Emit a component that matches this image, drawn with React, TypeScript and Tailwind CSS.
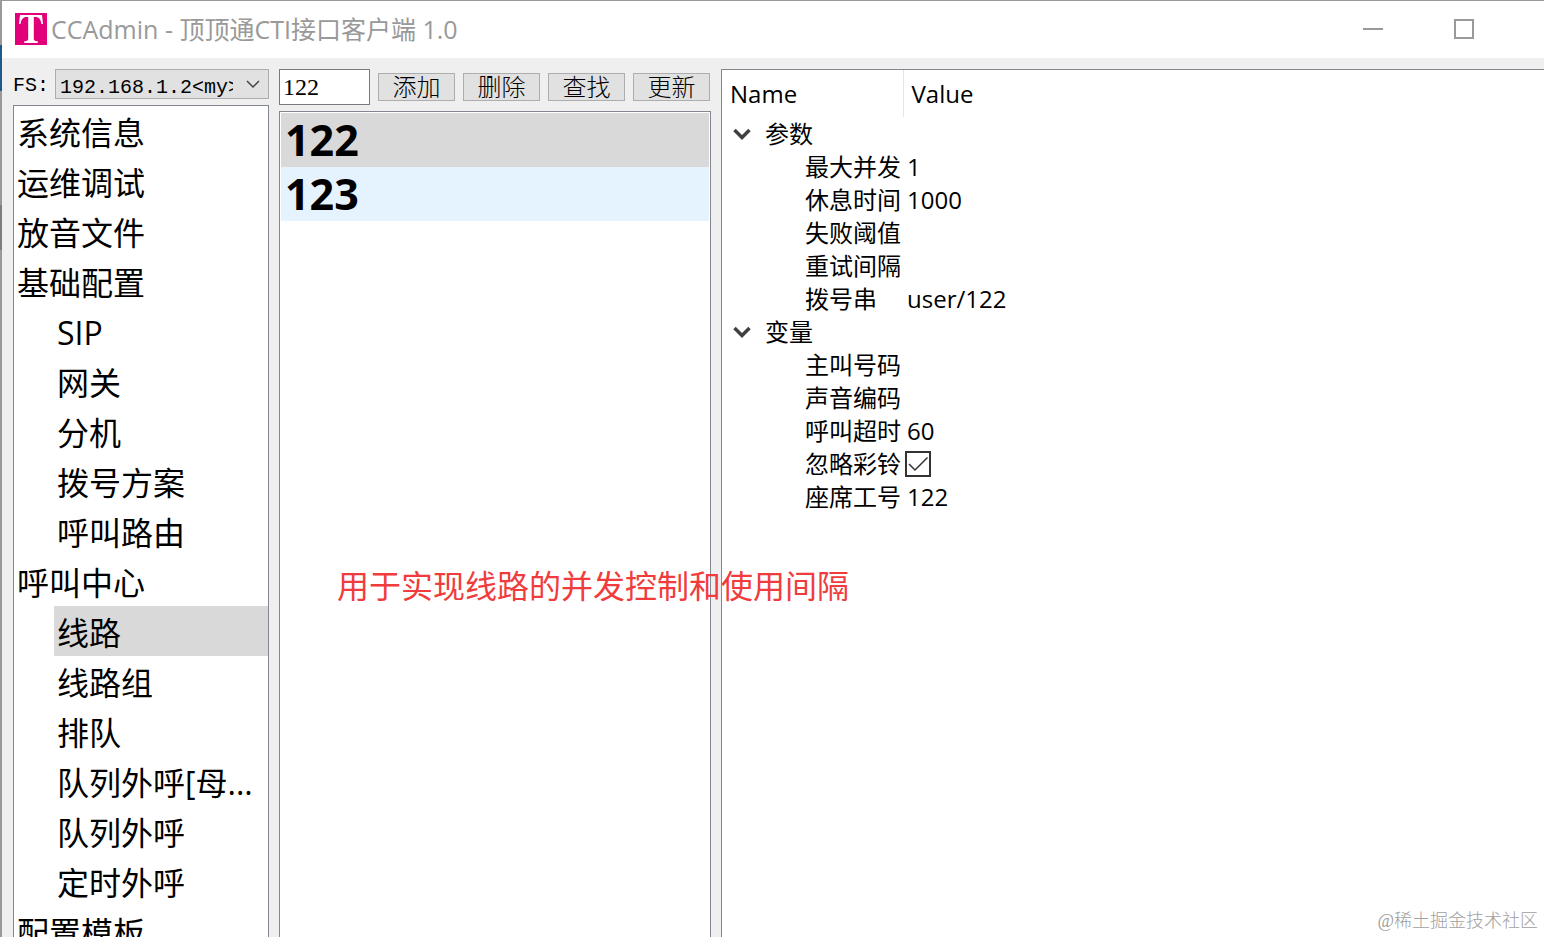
import React from 'react';

interface TreeItem {
    label: string;
    child?: boolean;
    active?: boolean;
}

interface Param {
    name: string;
    value?: string;
    checked?: boolean;
}

const tree: TreeItem[] = [
    { label: '系统信息' },
    { label: '运维调试' },
    { label: '放音文件' },
    { label: '基础配置' },
    { label: 'SIP', child: true },
    { label: '网关', child: true },
    { label: '分机', child: true },
    { label: '拨号方案', child: true },
    { label: '呼叫路由', child: true },
    { label: '呼叫中心' },
    { label: '线路', child: true, active: true },
    { label: '线路组', child: true },
    { label: '排队', child: true },
    { label: '队列外呼[母...', child: true },
    { label: '队列外呼', child: true },
    { label: '定时外呼', child: true },
    { label: '配置模板' },
];

const groups: { title: string; params: Param[] }[] = [
    {
        title: '参数',
        params: [
            { name: '最大并发', value: '1' },
            { name: '休息时间', value: '1000' },
            { name: '失败阈值' },
            { name: '重试间隔' },
            { name: '拨号串', value: 'user/122' },
        ],
    },
    {
        title: '变量',
        params: [
            { name: '主叫号码' },
            { name: '声音编码' },
            { name: '呼叫超时', value: '60' },
            { name: '忽略彩铃', checked: true },
            { name: '座席工号', value: '122' },
        ],
    },
];

const App: React.FC = () => (
    <div className="flex h-screen overflow-hidden border-t border-[#999999] bg-[#efefef] font-['Open_Sans','Noto_Sans_CJK_SC',sans-serif] text-black">
        {/* Desktop showing past the window edge */}
        <div className="flex w-[2px] shrink-0 flex-col bg-[#999999]">
            <div className="mt-11 h-[46px] bg-[#1d5a8c]" />
            <div className="mt-[114px] h-[45px] bg-[#7d7d7d]" />
        </div>
        <div className="relative flex min-w-0 flex-1 flex-col">
            <TitleBar />
            <div className="flex min-h-0 flex-1 gap-[10px] pl-[11px] pt-[11px]">
                <Sidebar />
                <LineList />
                <ParamPanel />
            </div>
            <p className="pointer-events-none absolute left-[335px] top-[560px] whitespace-nowrap text-[32px] leading-[50px] text-[#f03c3c]">
                用于实现线路的并发控制和使用间隔
            </p>
            <p className="pointer-events-none absolute bottom-1 right-[6px] font-['Liberation_Serif','Noto_Sans_CJK_SC',serif] text-lg font-light leading-6 text-[#a0a0a0]">
                @稀土掘金技术社区
            </p>
        </div>
    </div>
);

const TitleBar: React.FC = () => (
    <header className="flex h-[57px] shrink-0 items-center bg-white pb-[2px] pl-[13px] text-[#999999]">
        <svg className="h-8 w-8 shrink-0" viewBox="0 0 32 32" aria-hidden="true">
            <rect width="32" height="32" fill="#e2007a" />
            <path
                d="M5 2h22l1 9h-1.500C25.500 6 24 4 20.500 4H18.800v21.500c0 2 .8 2.600 4 2.700V30H9.200v-1.800c3.200-.1 4-.7 4-2.700V4h-1.700C8 4 6.500 6 5.500 11H4z"
                fill="#fff"
            />
        </svg>
        <h1 className="flex-1 pl-1 text-[25px] leading-8">CCAdmin - 顶顶通CTI接口客户端 1.0</h1>
        <div className="flex items-center gap-[71px] pr-[70px]">
            <button aria-label="Minimize">
                <svg className="h-5 w-5" viewBox="0 0 20 20" fill="none" stroke="#999" strokeWidth="2">
                    <path d="M0 10h20" />
                </svg>
            </button>
            <button aria-label="Maximize">
                <svg className="h-5 w-5" viewBox="0 0 20 20" fill="none" stroke="#999" strokeWidth="2">
                    <path d="M1 1h18v18H1z" />
                </svg>
            </button>
        </div>
    </header>
);

const Sidebar: React.FC = () => (
    <aside className="flex w-64 shrink-0 flex-col gap-[6px]">
        <div className="flex h-[30px] font-['Liberation_Mono',monospace] text-xl">
            <label htmlFor="fs" className="w-[42px] pt-px leading-8">FS:</label>
            <div className="relative min-w-0 flex-1">
                <select
                    id="fs"
                    className="h-full w-full appearance-none rounded-none border border-[#adadad] bg-[#e1e1e1] pl-1 pr-[35px] pt-1"
                >
                    <option>192.168.1.2&lt;my&gt;</option>
                </select>
                <svg
                    className="pointer-events-none absolute right-2 top-2 h-[14px] w-4"
                    viewBox="0 0 16 14"
                    fill="none"
                    stroke="#444"
                    strokeWidth="1.500"
                >
                    <path d="M2 4l6 6 6-6" />
                </svg>
            </div>
        </div>
        <nav className="min-h-0 flex-1 overflow-hidden border border-b-0 border-[#828790] bg-white">
            <ul>
                {tree.map((item) => (
                    <li key={item.label} className={item.child ? 'pl-10' : ''}>
                        <button
                            className={`block h-[50px] w-full whitespace-nowrap pl-[3px] pt-[2px] text-left text-[32px] leading-[50px] ${
                                item.active ? 'bg-[#d9d9d9]' : ''
                            }`}
                        >
                            {item.label}
                        </button>
                    </li>
                ))}
            </ul>
        </nav>
    </aside>
);

const LineList: React.FC = () => (
    <section className="flex w-[432px] shrink-0 flex-col gap-[6px]">
        <div className="flex items-center gap-2 pr-px">
            <input
                aria-label="线路"
                defaultValue="122"
                className="h-9 w-[91px] border border-[#7a7a7a] bg-white px-[3px] font-['Liberation_Serif',serif] text-2xl"
            />
            {['添加', '删除', '查找', '更新'].map((label) => (
                <button
                    key={label}
                    className="h-7 flex-1 border border-[#adadad] bg-[#e1e1e1] text-2xl font-light leading-6"
                >
                    {label}
                </button>
            ))}
        </div>
        <ul className="min-h-0 flex-1 border border-b-0 border-[#828790] bg-white p-px text-[43px] font-bold leading-[54px]">
            <li className="h-[54px] bg-[#d9d9d9] pl-1">122</li>
            <li className="h-[54px] bg-[#e5f3ff] pl-1">123</li>
        </ul>
    </section>
);

const ParamPanel: React.FC = () => (
    <section className="min-w-0 flex-1 border-l border-t border-[#828790] bg-white">
        <table className="w-full table-fixed border-collapse text-left text-2xl">
            <thead>
                <tr className="h-[47px]">
                    <th className="w-[181px] border-r border-[#e5e5e5] p-0 pl-2 font-normal">Name</th>
                    <th className="p-0 pl-2 font-normal">Value</th>
                </tr>
            </thead>
            {groups.map((group) => (
                <tbody key={group.title} className="leading-[33px]">
                    <tr className="h-[33px]">
                        <th colSpan={2} className="p-0 font-normal">
                            <button className="flex items-center gap-[13px] pl-[10px]">
                                <svg className="h-5 w-5" viewBox="0 0 20 20" fill="none" stroke="#404040" strokeWidth="3.500">
                                    <path d="M2.500 6l7.500 7.500L17.500 6" />
                                </svg>
                                {group.title}
                            </button>
                        </th>
                    </tr>
                    {group.params.map((param) => (
                        <tr key={param.name} className="h-[33px]">
                            <th className="whitespace-nowrap p-0 pl-[83px] font-normal">{param.name}</th>
                            <td className="p-0 pl-1">{param.checked ? <Tick label={param.name} /> : param.value}</td>
                        </tr>
                    ))}
                </tbody>
            ))}
        </table>
    </section>
);

const Tick: React.FC<{ label: string }> = ({ label }) => (
    <span className="relative -ml-[2px] block h-[26px] w-[26px]">
        <input
            type="checkbox"
            aria-label={label}
            defaultChecked
            className="peer block h-full w-full appearance-none border-2 border-[#333333] bg-white"
        />
        <svg
            className="pointer-events-none absolute inset-0 hidden h-full w-full peer-checked:block"
            viewBox="0 0 26 26"
            fill="none"
            stroke="#333"
            strokeWidth="1.500"
        >
            <path d="M4 13l6 6L22.500 6.500" />
        </svg>
    </span>
);

export default App;
